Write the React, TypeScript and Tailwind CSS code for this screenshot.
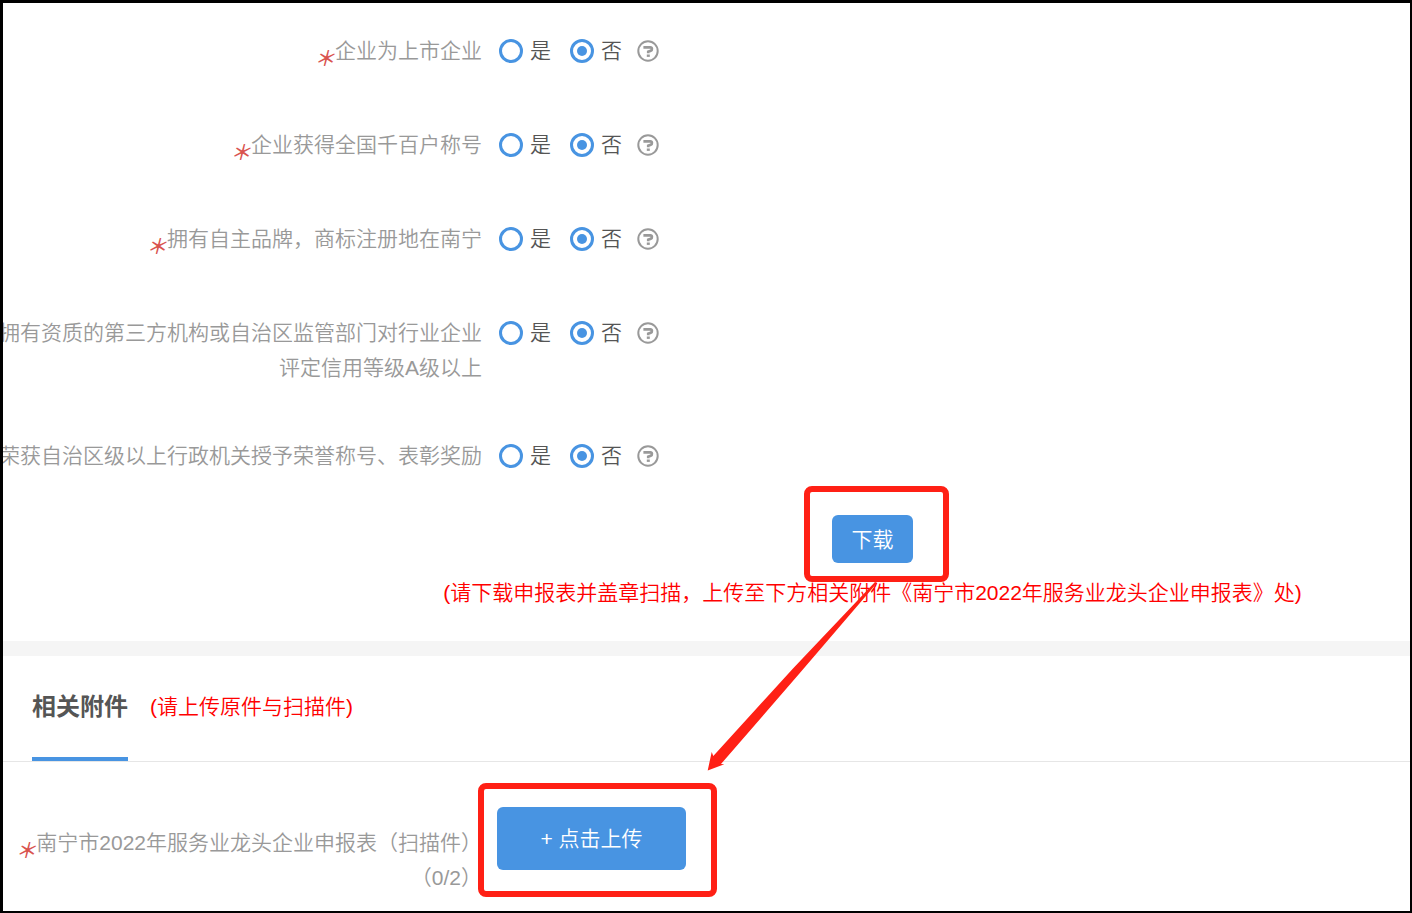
import { Fragment } from "react";

const questions = [
  { id: "listed", lines: ["企业为上市企业"], required: true },
  { id: "title", lines: ["企业获得全国千百户称号"], required: true },
  { id: "brand", lines: ["拥有自主品牌，商标注册地在南宁"], required: true },
  {
    id: "credit",
    lines: ["拥有资质的第三方机构或自治区监管部门对行业企业", "评定信用等级A级以上"],
    required: false,
  },
  { id: "honor", lines: ["荣获自治区级以上行政机关授予荣誉称号、表彰奖励"], required: false },
];

const Required = () => (
  <span className="relative top-2 inline-block w-[21px] text-center leading-none font-medium text-[#d9534f] italic">
    ＊
  </span>
);

const HelpIcon = () => (
  <svg viewBox="0 0 22 22" className="size-[22px]" fill="none" stroke="#999" aria-hidden="true">
    <circle cx="11" cy="11" r="9.7" strokeWidth="2" />
    <path d="M6.4 7.4h7c1.8 0 2 2.6.3 3.3l-2.4.9v1.7" strokeWidth="2.8" />
    <path d="M9.8 15.7h3" strokeWidth="2.4" />
  </svg>
);

const Radio = ({ name, value, checked }: { name: string; value: string; checked?: boolean }) => (
  <label className="flex items-center gap-[7px] text-[#555]">
    <input
      type="radio"
      name={name}
      value={value}
      defaultChecked={checked}
      className="size-6 shrink-0 appearance-none rounded-full border-3 border-[#4894e2] bg-clip-content p-1 checked:bg-[#4894e2]"
    />
    {value}
  </label>
);

const QuestionRow = ({ id, lines, required }: (typeof questions)[number]) => (
  <div className="mb-[53px] flex min-h-[41px]">
    <div id={id} className="flex w-[479px] shrink-0 justify-end text-right whitespace-nowrap text-[#999]">
      <p>
        {required && <Required />}
        {lines.map((line, index) => (
          <Fragment key={line}>
            {index > 0 && <br />}
            {line}
          </Fragment>
        ))}
      </p>
    </div>
    <div role="radiogroup" aria-labelledby={id} className="ml-[17px] flex h-[35px] items-center">
      <Radio name={id} value="是" />
      <div className="ml-[19px]">
        <Radio name={id} value="否" checked />
      </div>
      <button type="button" aria-label="帮助" className="ml-[15px]">
        <HelpIcon />
      </button>
    </div>
  </div>
);

export default function App() {
  return (
    <div className="relative overflow-hidden border-t-3 border-r-2 border-b-2 border-l-3 border-black bg-white font-['Liberation_Sans','Noto_Sans_CJK_SC',sans-serif] text-[21px] leading-[35px] font-[350]">
      <section className="pt-[30px]">
        {questions.map((question) => (
          <QuestionRow key={question.id} {...question} />
        ))}
        <div className="-mt-[46px] flex flex-col items-center pb-[31px] pl-[332px] text-center">
          <div className="ml-2 rounded-lg border-6 border-[#ff2015] pt-[23px] pr-[30px] pb-[13px] pl-[22px]">
            <button type="button" className="block h-12 w-[81px] rounded-md bg-[#4894e2] text-white">
              下载
            </button>
          </div>
          <p className="-mt-[7px] text-[#f00]">
            (请下载申报表并盖章扫描，上传至下方相关附件《南宁市2022年服务业龙头企业申报表》处)
          </p>
        </div>
      </section>

      <section className="border-t-15 border-[#f5f5f5]">
        <header className="flex h-[106px] items-end border-b border-[#e6e6e6] pl-[29px]">
          <h2 className="border-b-4 border-[#4894e2] pb-[33px] text-2xl leading-[35px] font-bold text-[#555]">
            相关附件
          </h2>
          <p className="ml-[22px] pb-[37px] text-[#f00]">(请上传原件与扫描件)</p>
        </header>
        <div className="flex items-start pt-[21px] pb-[14px]">
          <p id="upload-label" className="w-[479px] shrink-0 pt-[42px] text-right whitespace-nowrap text-[#999]">
            <Required />
            南宁市2022年服务业龙头企业申报表（扫描件）
            <br />
            （0/2）
          </p>
          <div className="-ml-1 rounded-lg border-6 border-[#ff2015] pt-[18px] pr-[25px] pb-[21px] pl-[13px]">
            <button
              type="button"
              aria-describedby="upload-label"
              className="block h-[63px] w-[189px] rounded-md bg-[#4894e2] text-white"
            >
              + 点击上传
            </button>
          </div>
        </div>
      </section>

      {/* arrow from the download box to the upload box */}
      <svg
        viewBox="0 0 174 192"
        className="pointer-events-none absolute top-[577px] left-[700px] h-[192px] w-[174px]"
        fill="#ff2015"
        aria-hidden="true"
      >
        <path d="M172 2 L174 3 L96 94 L18 184 L21.3 184.3 L4.7 190.5 L8.7 172 L10.3 176 L90 88.4 Z" />
      </svg>
    </div>
  );
}
